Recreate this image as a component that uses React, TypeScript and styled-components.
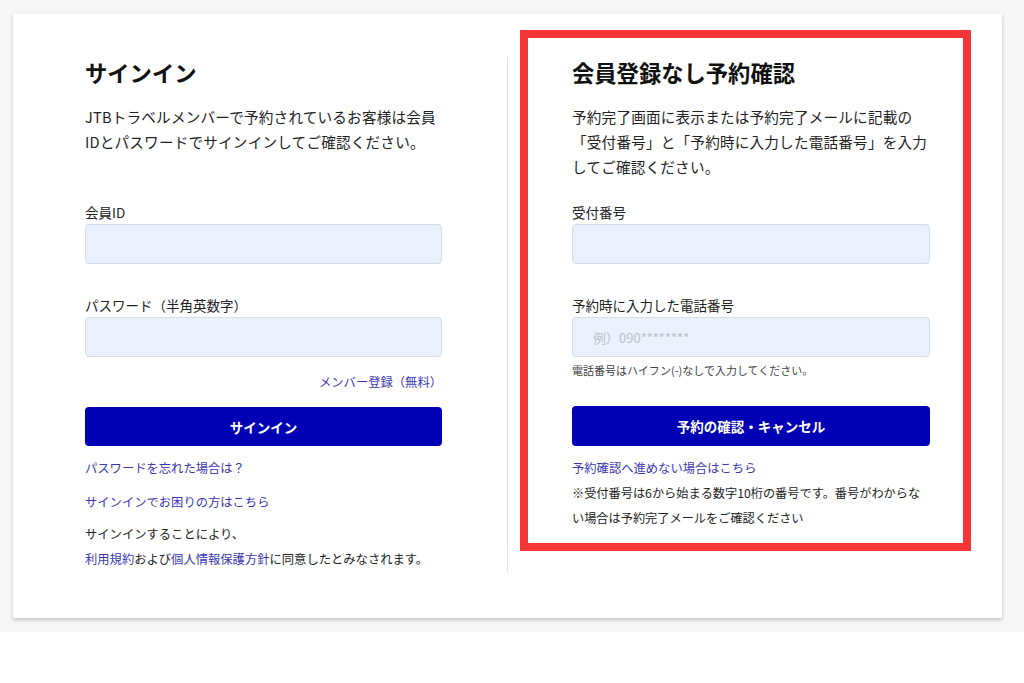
import styled, { createGlobalStyle } from "styled-components";

const GlobalStyle = createGlobalStyle`
  * {
    box-sizing: border-box;
  }

  body {
    margin: 0;
    background-color: #fff;
    color: #222;
    font-family: "Noto Sans CJK JP", "Noto Sans", sans-serif;
  }
`;

interface FieldProps {
  label: string;
  placeholder?: string;
  first?: boolean;
}

function Field({ label, placeholder, first }: FieldProps) {
  return (
    <FieldBox $first={first}>
      <Label>{label}</Label>
      <Input placeholder={placeholder} />
    </FieldBox>
  );
}

function App() {
  return (
    <>
      <GlobalStyle />
      <Backdrop>
        <Card>
          <SignInPanel>
            <Header>
              <Title>サインイン</Title>
              <Description>
                JTBトラベルメンバーで予約されているお客様は会員
                <br />
                IDとパスワードでサインインしてご確認ください。
              </Description>
            </Header>
            <Field label="会員ID" first />
            <Field label="パスワード（半角英数字）" />
            <RegisterRow>
              <TextLink href="#">メンバー登録（無料）</TextLink>
            </RegisterRow>
            <PrimaryButton $top={15} $height={39}>
              サインイン
            </PrimaryButton>
            <LinkLine $top={12}>
              <TextLink href="#">パスワードを忘れた場合は？</TextLink>
            </LinkLine>
            <LinkLine $top={14}>
              <TextLink href="#">サインインでお困りの方はこちら</TextLink>
            </LinkLine>
            <Agreement>
              サインインすることにより、
              <br />
              <TextLink href="#">利用規約</TextLink>および
              <TextLink href="#">個人情報保護方針</TextLink>
              に同意したとみなされます。
            </Agreement>
          </SignInPanel>

          <GuestPanel>
            <Header>
              <Title>会員登録なし予約確認</Title>
              <Description>
                予約完了画面に表示または予約完了メールに記載の
                <br />
                「受付番号」と「予約時に入力した電話番号」を入力
                <br />
                してご確認ください。
              </Description>
            </Header>
            <Field label="受付番号" first />
            <Field label="予約時に入力した電話番号" placeholder="例）090********" />
            <Helper>電話番号はハイフン(-)なしで入力してください。</Helper>
            <PrimaryButton $top={28} $height={40}>
              予約の確認・キャンセル
            </PrimaryButton>
            <LinkLine $top={12}>
              <TextLink href="#">予約確認へ進めない場合はこちら</TextLink>
            </LinkLine>
            <Note>
              ※受付番号は6から始まる数字10桁の番号です。番号がわからな
              <br />
              い場合は予約完了メールをご確認ください
            </Note>
          </GuestPanel>
        </Card>
      </Backdrop>
    </>
  );
}

export default App;

const Backdrop = styled.div`
  background-color: #f7f7f7;
  padding: 14px 22px 14px 13px;
`;

const Card = styled.main`
  display: flex;
  align-items: flex-start;
  min-height: 604px;
  padding: 16px 31px 46px 0;
  background-color: #fff;
  box-shadow: 0 2px 4px rgba(0, 0, 0, 0.22);
`;

const SignInPanel = styled.section`
  width: 495px;
  margin-top: 27px;
  padding: 0 65px 0 72px;
  border-right: 1px solid #e3e3e3;
`;

const GuestPanel = styled.section`
  width: 451px;
  margin-left: 12px;
  padding: 19px 33px 12.5px 44px;
  border: 8px solid #f53636;
`;

const Header = styled.div`
  min-height: 145px;
`;

const Title = styled.h2`
  margin: 0;
  font-size: 22.3px;
  line-height: 30px;
  font-weight: 700;
  color: #111;
`;

const Description = styled.p`
  margin: 16.5px 0 0;
  font-size: 14.6px;
  line-height: 25px;
  letter-spacing: 0.2px;
  white-space: nowrap;
  color: #222;
`;

const FieldBox = styled.div<{ $first?: boolean }>`
  margin-top: ${({ $first }) => ($first ? "0" : "31px")};
`;

const Label = styled.label`
  display: block;
  margin-bottom: 2px;
  font-size: 13.5px;
  line-height: 20px;
  color: #222;
`;

const Input = styled.input`
  display: block;
  width: 100%;
  height: 40px;
  padding: 0 20px;
  border: 1px solid #d7dde8;
  border-radius: 4px;
  background-color: #eaf0fc;
  font-family: inherit;
  font-size: 13px;
  color: #222;
  outline: none;

  &::placeholder {
    color: #bfc2c9;
  }
`;

const RegisterRow = styled.div`
  margin-top: 15px;
  text-align: right;
  font-size: 12.3px;
  line-height: 20px;
`;

const TextLink = styled.a`
  color: #3a37b3;
  text-decoration: none;
`;

const PrimaryButton = styled.button<{ $top: number; $height: number }>`
  display: block;
  width: 100%;
  height: ${({ $height }) => $height}px;
  margin-top: ${({ $top }) => $top}px;
  border: none;
  border-radius: 4px;
  background-color: #0000b5;
  color: #fff;
  font-family: inherit;
  font-size: 13.5px;
  font-weight: 700;
  cursor: pointer;
`;

const LinkLine = styled.div<{ $top: number }>`
  margin-top: ${({ $top }) => $top}px;
  font-size: 12.3px;
  line-height: 20px;
`;

const Agreement = styled.p`
  margin: 10px 0 0;
  font-size: 12.3px;
  line-height: 25px;
  color: #222;
  white-space: nowrap;
`;

const Helper = styled.p`
  margin: 5px 0 0;
  font-size: 11px;
  line-height: 16px;
  color: #444;
`;

const Note = styled.p`
  margin: 2.5px 0 0;
  font-size: 12.2px;
  line-height: 25px;
  color: #222;
  white-space: nowrap;
`;
